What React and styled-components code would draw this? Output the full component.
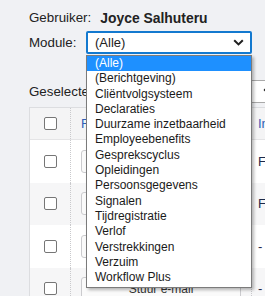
import React from "react";
import styled, { createGlobalStyle } from "styled-components";

const GlobalStyle = createGlobalStyle`
  html, body {
    margin: 0;
    padding: 0;
  }
  body {
    background: #f0f1f4;
    font-family: "Liberation Sans", Arial, sans-serif;
    color: #222;
    overflow: hidden;
  }
`;

const modules = [
  "(Alle)",
  "(Berichtgeving)",
  "Cliëntvolgsysteem",
  "Declaraties",
  "Duurzame inzetbaarheid",
  "Employeebenefits",
  "Gesprekscyclus",
  "Opleidingen",
  "Persoonsgegevens",
  "Signalen",
  "Tijdregistratie",
  "Verlof",
  "Verstrekkingen",
  "Verzuim",
  "Workflow Plus",
];

const rows = [
  { action: "Stuur e-mail", info: "Fout" },
  { action: "Stuur e-mail", info: "Fout" },
  { action: "Stuur e-mail", info: "-" },
  { action: "Stuur e-mail", info: "-" },
];

function Chevron() {
  return (
    <svg width="11" height="7" viewBox="0 0 11 7">
      <polyline
        points="1.2,1.2 5.5,5.4 9.8,1.2"
        fill="none"
        stroke="#1f1f1f"
        strokeWidth="2"
      />
    </svg>
  );
}

function App() {
  return (
    <>
      <GlobalStyle />
      <Page>
        <UserRow>
          <span>Gebruiker:</span>
          <UserName>Joyce Salhuteru</UserName>
        </UserRow>

        <FieldRow>
          <Label>Module:</Label>
          <SelectBox $focused $width={166}>
            <span>(Alle)</span>
            <Chevron />
          </SelectBox>
        </FieldRow>

        <FieldRow $gap={26}>
          <Label $wide>Geselecteerde medewerkers:</Label>
          <SelectBox $width={72}>
            <span>Alle</span>
            <Chevron />
          </SelectBox>
        </FieldRow>

        <Table>
          <HeaderRow>
            <CheckCell>
              <Checkbox />
            </CheckCell>
            <Cell>
              <HeadLink>Functie</HeadLink>
            </Cell>
            <Cell $last>
              <HeadLink>Info</HeadLink>
            </Cell>
          </HeaderRow>
          {rows.map((row, i) => (
            <BodyRow key={i} $odd={i % 2 === 1}>
              <CheckCell>
                <Checkbox />
              </CheckCell>
              <Cell>
                <RowButton>{row.action}</RowButton>
              </Cell>
              <Cell $last>{row.info}</Cell>
            </BodyRow>
          ))}
        </Table>

        <OptionList>
          {modules.map((m, i) => (
            <Option key={m} $selected={i === 0}>
              {m}
            </Option>
          ))}
        </OptionList>
      </Page>
    </>
  );
}

export default App;

const Page = styled.div`
  position: relative;
  width: 265px;
  height: 296px;
  overflow: hidden;
  box-sizing: border-box;
  padding: 10px 0 0 29px;
`;

const UserRow = styled.div`
  display: flex;
  gap: 9px;
  font-size: 13.33px;
  line-height: 16px;
  height: 16px;
  white-space: nowrap;
`;

const UserName = styled.span`
  font-weight: bold;
  font-size: 13.9px;
`;

const FieldRow = styled.div`
  display: flex;
  align-items: center;
  margin-top: ${(p) => p.$gap || 5}px;
  height: 23px;
  white-space: nowrap;
`;

const Label = styled.span`
  flex: none;
  width: ${(p) => (p.$wide ? "auto" : "57px")};
  margin-right: ${(p) => (p.$wide ? "6px" : "0")};
  font-size: 13.33px;
`;

const SelectBox = styled.div`
  flex: none;
  box-sizing: border-box;
  width: ${(p) => p.$width}px;
  height: 23px;
  display: flex;
  align-items: center;
  justify-content: space-between;
  padding: 0 6px 0 7px;
  background: #fff;
  border: ${(p) => (p.$focused ? "2px solid #1379cf" : "1px solid #a9a9a9")};
  border-radius: 2px;
  font-size: 13px;
  color: #222;
`;

const Table = styled.div`
  margin-top: 4px;
  width: 300px;
  background: #fff;
  border: 1px solid #dcdde0;
  font-size: 13px;
`;

const HeaderRow = styled.div`
  display: grid;
  grid-template-columns: 41px 181px 1fr;
  height: 31px;
  background: #f4f4f5;
  border-bottom: 1px solid #e4e4e6;
`;

const BodyRow = styled.div`
  display: grid;
  grid-template-columns: 41px 181px 1fr;
  height: 42.5px;
  background: ${(p) => (p.$odd ? "#f6f6f7" : "#fff")};
`;

const Cell = styled.div`
  display: flex;
  align-items: center;
  padding-left: ${(p) => (p.$last ? "6px" : "10px")};
  border-right: ${(p) => (p.$last ? "none" : "1px dotted #c9c9cc")};
  white-space: nowrap;
  color: #1b2a4a;
`;

const CheckCell = styled(Cell)`
  padding-left: 14px;
`;

const Checkbox = styled.span`
  display: block;
  box-sizing: border-box;
  width: 13px;
  height: 13px;
  border: 1px solid #767676;
  border-radius: 2px;
  background: #fff;
`;

const HeadLink = styled.span`
  color: #2e5fb8;
`;

const RowButton = styled.div`
  box-sizing: border-box;
  width: 160px;
  height: 23px;
  display: flex;
  align-items: center;
  justify-content: center;
  border: 1px solid #cbcbce;
  border-radius: 3px;
  background: #fafafa;
  color: #333;
  font-size: 12px;
`;

const OptionList = styled.div`
  position: absolute;
  left: 86px;
  top: 55px;
  width: 166px;
  box-sizing: border-box;
  padding-bottom: 2px;
  background: #fff;
  border: 1px solid #7b7b7b;
  box-shadow: 2px 2px 3px rgba(0, 0, 0, 0.28);
  z-index: 10;
`;

const Option = styled.div`
  height: 15.3px;
  line-height: 15.3px;
  padding-left: 8px;
  font-size: 12px;
  white-space: nowrap;
  color: ${(p) => (p.$selected ? "#fff" : "#1a1a1a")};
  background: ${(p) => (p.$selected ? "#1e90ff" : "transparent")};
`;
